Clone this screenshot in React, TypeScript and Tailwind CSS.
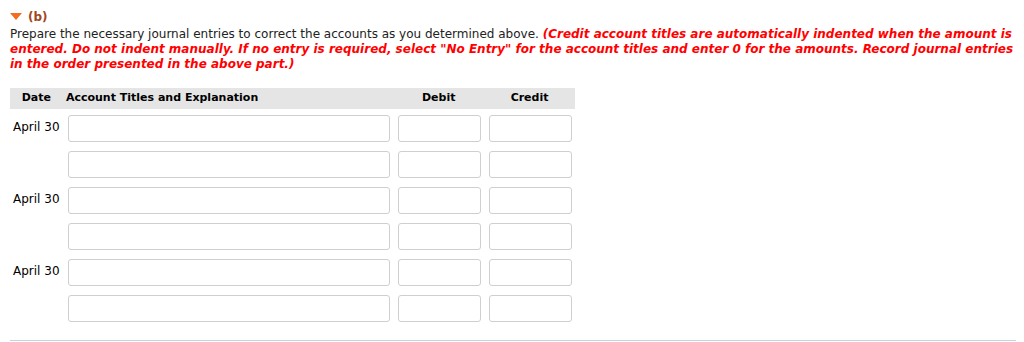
import React from 'react';

const rows = ['April 30', '', 'April 30', '', 'April 30', ''];

const Box = ({ className }: { className: string }) => (
  <div className={`h-[27px] rounded-[3px] border border-[#cfcfcf] bg-white ${className}`} />
);

const App = () => {
  return (
    <div className="w-[1024px] h-[342px] bg-white pl-[10px] pr-[8px] pt-[9px] text-[12px] text-[#222] font-['DejaVu_Sans',Verdana,sans-serif]">
      {/* Part heading */}
      <div className="flex items-center gap-[6px] h-[15px]">
        <svg width="12" height="7" viewBox="0 0 12 7">
          <polygon points="0,0 12,0 6,7" fill="#f26c21" />
        </svg>
        <span className="font-bold text-[#a0461c]">(b)</span>
      </div>

      {/* Instructions */}
      <p className="mt-[3px] leading-[15px]">
        Prepare the necessary journal entries to correct the accounts as you determined above.{' '}
        <span className="font-bold italic text-[#f00]">
          (Credit account titles are automatically indented when the amount is entered. Do not indent manually. If no entry is required, select "No Entry" for the account titles and enter 0 for the amounts. Record journal entries in the order presented in the above part.)
        </span>
      </p>

      {/* Journal table */}
      <div className="mt-[16px] w-[565px]">
        <div className="flex items-center h-[21px] bg-[#e5e5e5] text-[11px] font-bold text-black">
          <div className="w-[48px] text-right pr-[7px]">Date</div>
          <div className="w-[336px] pl-[8px]">Account Titles and Explanation</div>
          <div className="w-[91px] text-center">Debit</div>
          <div className="w-[91px] text-center">Credit</div>
        </div>
        <div className="mt-[6px] flex flex-col gap-[9px]">
          {rows.map((date, i) => (
            <div key={i} className="flex items-center h-[27px]">
              <div className="w-[58px] pl-[3px] -mt-[4px] text-[12px] text-black">{date}</div>
              <Box className="w-[322px]" />
              <Box className="w-[83px] ml-[8px]" />
              <Box className="w-[83px] ml-[8px]" />
            </div>
          ))}
        </div>
      </div>

      <div className="mt-[18px] border-t border-[#c8d3e0]" />
    </div>
  );
};

export default App;
